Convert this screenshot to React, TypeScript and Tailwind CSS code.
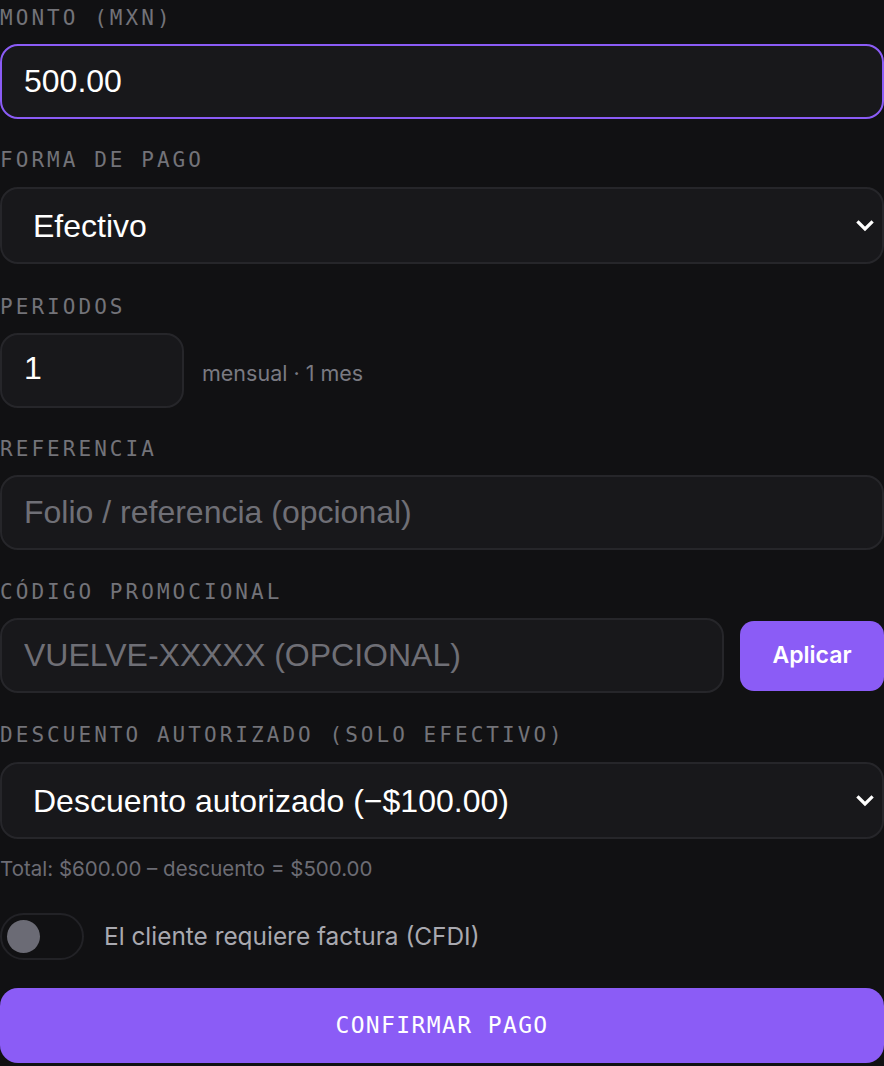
import { useState } from "react";

const label = "block font-['DejaVu_Sans_Mono',monospace] text-[21px] leading-7 tracking-[0.145em] uppercase text-[#737379]";
const box = "rounded-[18px] border-2 bg-[#18181b] px-[22px] font-['Liberation_Sans',Arial,sans-serif] text-[32px] text-white placeholder:text-[#6f6f76] outline-none";

function Chevron() {
    return (
        <svg className="pointer-events-none absolute right-[10px] top-1/2 -translate-y-1/2" width="18" height="12" viewBox="0 0 18 12" fill="none">
            <path d="M2.5 2.5 9 9l6.5-6.5" stroke="#fff" strokeWidth="3.2" strokeLinecap="square" />
        </svg>
    );
}

export default function App() {
    const [cfdi, setCfdi] = useState(false);

    return (
        <div className="min-h-[1066px] w-[884px] bg-[#111113] pt-1 font-['Inter',sans-serif]">
            <form className="flex flex-col gap-[27px]" onSubmit={(e) => e.preventDefault()}>

                {/* Monto */}
                <div className="flex flex-col gap-3">
                    <label className={label}>Monto (MXN)</label>
                    <input className={`${box} h-[75px] w-full border-[#8b5cf6]`} defaultValue="500.00" />
                </div>

                {/* Forma de pago */}
                <div className="flex flex-col gap-3">
                    <label className={label}>Forma de pago</label>
                    <div className="relative mt-[1px] mb-[2px]">
                        <select className={`${box} h-[77px] w-full appearance-none border-[#26262a] pl-[31px]`} defaultValue="efectivo">
                            <option value="efectivo">Efectivo</option>
                            <option value="tarjeta">Tarjeta</option>
                            <option value="transferencia">Transferencia</option>
                        </select>
                        <Chevron />
                    </div>
                </div>

                {/* Periodos */}
                <div className="flex flex-col gap-3">
                    <label className={label}>Periodos</label>
                    <div className="flex items-center gap-[18px]">
                        <input className={`${box} h-[75px] w-[184px] shrink-0 border-[#26262a] pb-[4px]`} defaultValue="1" />
                        <span className="whitespace-nowrap pt-[6px] text-[21.5px] text-[#7a7a82]">mensual · 1 mes</span>
                    </div>
                </div>

                {/* Referencia */}
                <div className="mb-[1px] flex flex-col gap-3">
                    <label className={label}>Referencia</label>
                    <input className={`${box} h-[75px] w-full border-[#26262a]`} placeholder="Folio / referencia (opcional)" />
                </div>

                {/* Codigo promocional */}
                <div className="mb-[1px] flex flex-col gap-3">
                    <label className={label}>Código promocional</label>
                    <div className="flex items-center gap-[16px]">
                        <input className={`${box} h-[75px] min-w-0 flex-1 border-[#26262a]`} placeholder="VUELVE-XXXXX (OPCIONAL)" />
                        <button type="button" className="h-[70px] w-[144px] shrink-0 rounded-[14px] bg-[#8b5cf6] text-[23px] font-semibold text-white">
                            Aplicar
                        </button>
                    </div>
                </div>

                {/* Descuento */}
                <div className="flex flex-col gap-3">
                    <label className={label}>Descuento autorizado (solo efectivo)</label>
                    <div className="relative mt-[1px] mb-[2px]">
                        <select className={`${box} h-[77px] w-full appearance-none border-[#26262a] pl-[31px]`} defaultValue="100">
                            <option value="0">Sin descuento</option>
                            <option value="100">Descuento autorizado (−$100.00)</option>
                        </select>
                        <Chevron />
                    </div>
                    <p className="mt-[2px] text-[20.5px] leading-7 text-[#6c6c74]">Total: $600.00 – descuento = $500.00</p>
                </div>

                {/* CFDI */}
                <div className="mt-[3px] flex items-center gap-5">
                    <button
                        type="button"
                        onClick={() => setCfdi(!cfdi)}
                        className={`flex h-[47px] w-[84px] shrink-0 items-center rounded-full border-2 border-[#222226] px-[5px] ${cfdi ? "justify-end bg-[#8b5cf6]" : "justify-start bg-[#111113]"}`}
                    >
                        <span className="h-[33px] w-[33px] rounded-full bg-[#6b6b75]" />
                    </button>
                    <span className="text-[24.4px] text-[#a9a9b0]">El cliente requiere factura (CFDI)</span>
                </div>

                <button type="submit" className="mt-[1px] h-[75px] w-full rounded-[18px] bg-[#8b5cf6] font-['DejaVu_Sans_Mono',monospace] text-[23px] tracking-[0.06em] text-white">
                    CONFIRMAR PAGO
                </button>
            </form>
        </div>
    );
}
